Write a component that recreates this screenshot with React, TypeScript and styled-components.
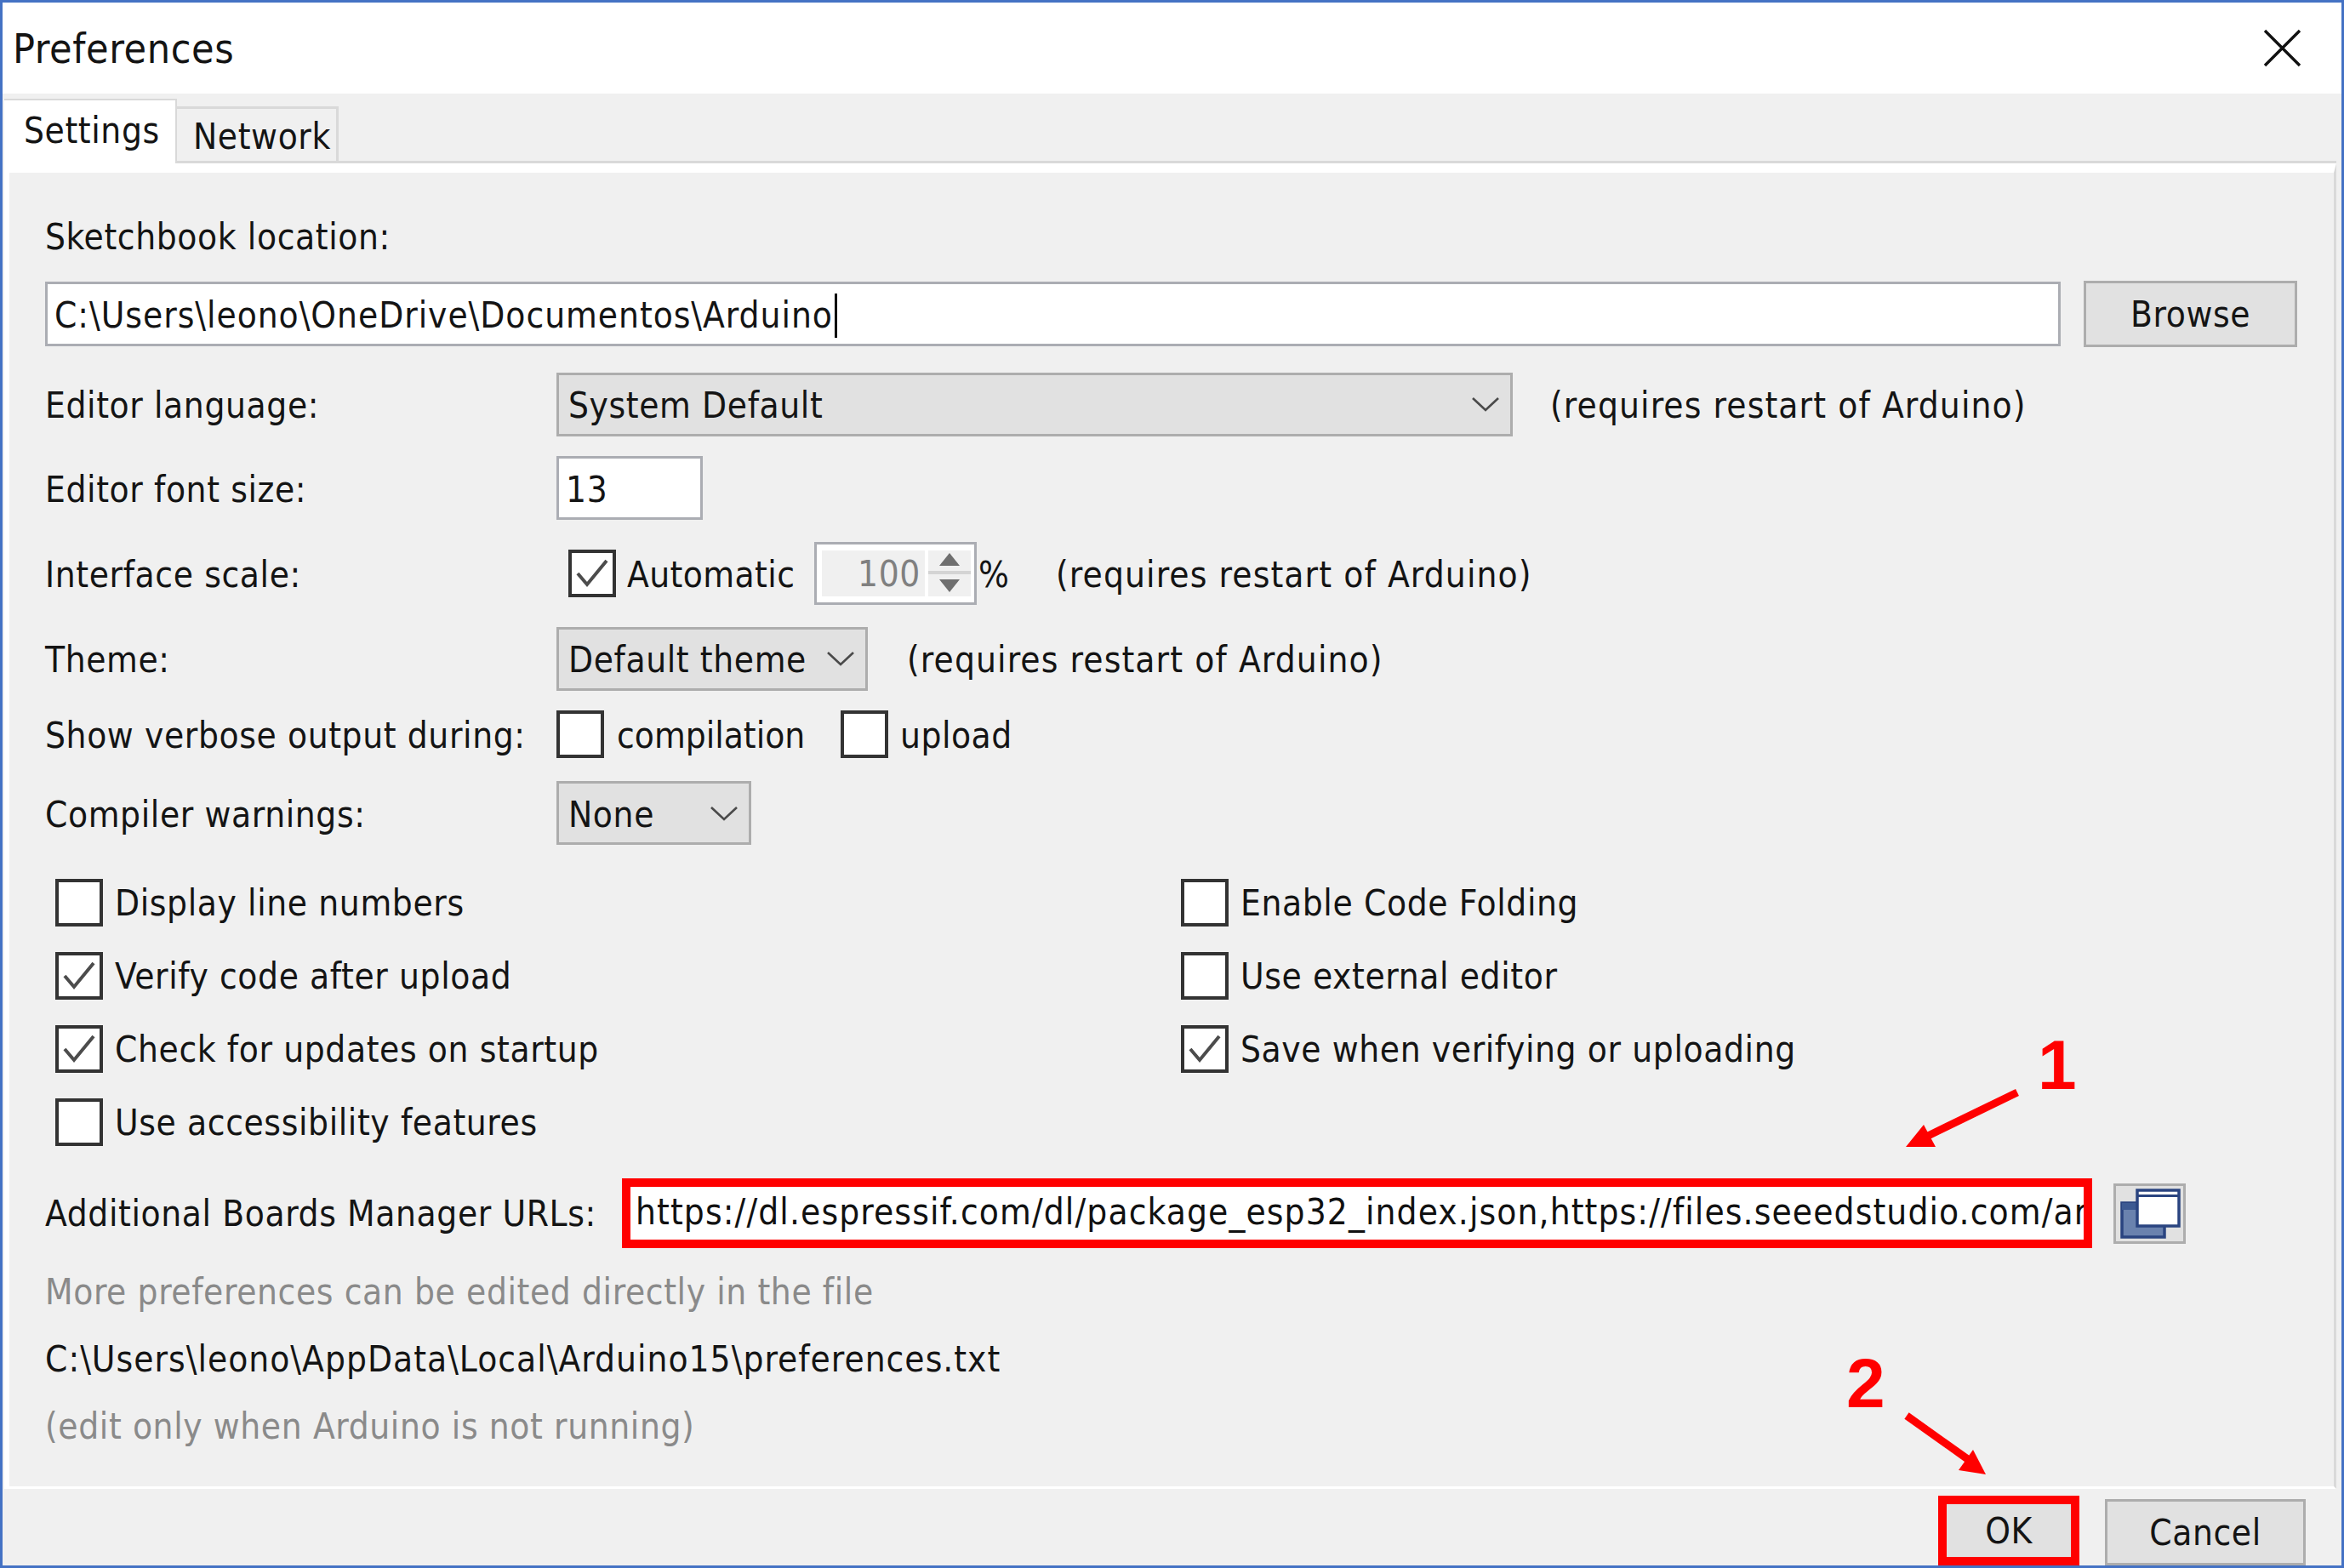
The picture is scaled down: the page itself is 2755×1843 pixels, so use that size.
import React from 'react';
import styled, { createGlobalStyle } from 'styled-components';

const GlobalStyle = createGlobalStyle`
    html, body {
        margin: 0;
        padding: 0;
        background: #f0f0f0;
    }
    * {
        box-sizing: border-box;
    }
`

const checkRows = [
    [
        { label: 'Display line numbers', checked: false },
        { label: 'Enable Code Folding', checked: false },
    ],
    [
        { label: 'Verify code after upload', checked: true },
        { label: 'Use external editor', checked: false },
    ],
    [
        { label: 'Check for updates on startup', checked: true },
        { label: 'Save when verifying or uploading', checked: true },
    ],
    [
        { label: 'Use accessibility features', checked: false },
    ],
];

const RESTART = '(requires restart of Arduino)';

const Chevron = () => (
    <svg width="34" height="20" viewBox="0 0 34 20">
        <polyline points="2,3 17,17 32,3" fill="none" stroke="#4a4a4a" strokeWidth="2.6" />
    </svg>
);

const Select = (props: { width: number; value: string }) => (
    <SelectBox $width={props.width}>
        <SelectText>{props.value}</SelectText>
        <Chevron />
    </SelectBox>
);

const Check = (props: { checked?: boolean }) => (
    <CheckBox>
        {props.checked && (
            <svg width="42" height="40" viewBox="0 0 42 40">
                <polyline points="4,20 15,33 38,5" fill="none" stroke="#4c4c4c" strokeWidth="4" />
            </svg>
        )}
    </CheckBox>
);

export default function App() {
    return (
        <Window>
            <GlobalStyle />
            <TitleBar>
                <Title>Preferences</Title>
                <svg width="45" height="45" viewBox="0 0 45 45">
                    <path d="M2 2 L43 43 M43 2 L2 43" stroke="#111" strokeWidth="3.4" />
                </svg>
            </TitleBar>
            <Body>
                <TabStrip>
                    <ActiveTab>Settings</ActiveTab>
                    <Tab>Network</Tab>
                </TabStrip>
                <Panel>
                    <Row $h={50} $mt={50}>Sketchbook location:</Row>
                    <Row $h={78} $mt={27}>
                        <TextBox $width={2369} $h={76} $ls={0.95}>
                            C:\Users\leono\OneDrive\Documentos\Arduino<Caret />
                        </TextBox>
                        <Button $width={251} $left={27}>Browse</Button>
                    </Row>
                    <Row $h={76} $mt={29}>
                        <Label>Editor language:</Label>
                        <Select width={1124} value="System Default" />
                        <Note $left={44} $ls={1.1}>{RESTART}</Note>
                    </Row>
                    <Row $h={75} $mt={23}>
                        <Label>Editor font size:</Label>
                        <TextBox $width={172} $h={75}>13</TextBox>
                    </Row>
                    <Row $h={74} $mt={26}>
                        <Label>Interface scale:</Label>
                        <ScaleCheck><Check checked /></ScaleCheck>
                        <Note $left={13} $width={199} $ls={0.4}>Automatic</Note>
                        <Spinner>
                            <SpinnerValue>100</SpinnerValue>
                            <SpinnerButtons>
                                <svg width="50" height="53" viewBox="0 0 50 53">
                                    <path d="M25 3 L37 18 L13 18 Z" fill="#6f6f6f" />
                                    <rect x="0" y="24" width="50" height="4" fill="#d4d4d4" />
                                    <path d="M13 34 L37 34 L25 49 Z" fill="#6f6f6f" />
                                </svg>
                            </SpinnerButtons>
                        </Spinner>
                        <Note $left={2} $width={42}>%</Note>
                        <Note $left={49} $ls={1.1}>{RESTART}</Note>
                    </Row>
                    <Row $h={74} $mt={26}>
                        <Label>Theme:</Label>
                        <Select width={366} value="Default theme" />
                        <Note $left={46} $ls={1.1}>{RESTART}</Note>
                    </Row>
                    <Row $h={54} $mt={25}>
                        <Label>Show verbose output during:</Label>
                        <Check />
                        <Note $left={15} $width={263} $ls={0}>compilation</Note>
                        <CheckBox />
                        <Note $left={14} $ls={0.5}>upload</Note>
                    </Row>
                    <Row $h={75} $mt={28}>
                        <Label>Compiler warnings:</Label>
                        <Select width={229} value="None" />
                    </Row>
                    <CheckGrid>
                        {checkRows.map((row) =>
                            row.map((item) => (
                                <CheckItem key={item.label}>
                                    <Check checked={item.checked} />
                                    <span>{item.label}</span>
                                </CheckItem>
                            ))
                        )}
                    </CheckGrid>
                    <Row $h={82} $mt={38}>
                        <BoardsLabel>Additional Boards Manager URLs:</BoardsLabel>
                        <UrlBox>https://dl.espressif.com/dl/package_esp32_index.json,https://files.seeedstudio.com/arduino/package_seeeduino_boards_index.json</UrlBox>
                        <IconButton>
                            <svg width="72" height="60" viewBox="0 0 72 60">
                                <rect x="3" y="18" width="50" height="40" fill="#6a82ae" stroke="#2a4480" strokeWidth="3.5" />
                                <rect x="3" y="18" width="50" height="8" fill="#3d5a92" />
                                <rect x="21" y="3" width="49" height="42" fill="#fff" stroke="#2a4480" strokeWidth="3.5" />
                                <rect x="21" y="8" width="49" height="3" fill="#2a4480" />
                            </svg>
                        </IconButton>
                    </Row>
                    <Row $h={50} $mt={26} $muted>More preferences can be edited directly in the file</Row>
                    <Row $h={50} $mt={29} $ls={1}>C:\Users\leono\AppData\Local\Arduino15\preferences.txt</Row>
                    <Row $h={50} $mt={29} $muted>(edit only when Arduino is not running)</Row>
                </Panel>
            </Body>
            <Footer>
                <OkBox>OK</OkBox>
                <Button $width={236} $left={30}>Cancel</Button>
            </Footer>

            <Arrows width="2755" height="1843" viewBox="0 0 2755 1843">
                <line x1="2371" y1="1284" x2="2262" y2="1337" stroke="#ff0000" strokeWidth="9" />
                <path d="M2240 1348 L2261 1322 L2275 1348 Z" fill="#ff0000" />
                <line x1="2241" y1="1664" x2="2314" y2="1716" stroke="#ff0000" strokeWidth="9" />
                <path d="M2334 1733 L2319 1704 L2302 1728 Z" fill="#ff0000" />
            </Arrows>
            <Callout $x={2392} $y={1208}>1</Callout>
            <Callout $x={2167} $y={1582}>2</Callout>
        </Window>
    );
}

const Window = styled.div`
    position: relative;
    width: 2755px;
    height: 1843px;
    overflow: hidden;
    border: 3px solid #4472c4;
    background: #f0f0f0;
    color: #141414;
    font-family: 'DejaVu Sans Condensed', 'DejaVu Sans', sans-serif;
    font-stretch: condensed;
    font-size: 42px;
    letter-spacing: 0.6px;
    display: flex;
    flex-direction: column;
`
const TitleBar = styled.div`
    height: 107px;
    flex: none;
    background: #ffffff;
    display: flex;
    align-items: center;
    justify-content: space-between;
    padding: 0 47px 0 12px;
`
const Title = styled.div`
    font-size: 48px;
`
const Body = styled.div`
    height: 1640px;
    flex: none;
    padding: 6px 6px 0 2px;
    display: flex;
    flex-direction: column;
`
const TabStrip = styled.div`
    height: 76px;
    flex: none;
    display: flex;
    align-items: flex-end;
    position: relative;
    &::after {
        content: '';
        flex: 1;
        height: 3px;
        margin-bottom: 0;
        background: #d9d9d9;
    }
`
const ActiveTab = styled.div`
    width: 203px;
    height: 76px;
    background: #ffffff;
    border: solid #d9d9d9;
    border-width: 2px 2px 0 0;
    padding-left: 23px;
    line-height: 72px;
`
const Tab = styled.div`
    width: 190px;
    height: 67px;
    border: 3px solid #d9d9d9;
    border-left: none;
    padding-left: 19px;
    line-height: 66px;
`
const Panel = styled.div`
    flex: 1;
    background: #f0f0f0;
    border-style: solid;
    border-color: #ffffff #d9d9d9 #ffffff #ffffff;
    border-width: 11px 3px 3px 6px;
    padding-left: 42px;
    display: flex;
    flex-direction: column;
`
const Row = styled.div<{ $h: number; $mt: number; $muted?: boolean; $ls?: number }>`
    height: ${props => props.$h}px;
    margin-top: ${props => props.$mt}px;
    flex: none;
    display: flex;
    align-items: center;
    white-space: nowrap;
    color: ${props => props.$muted ? '#8a8a8a' : 'inherit'};
    ${props => props.$ls !== undefined && `letter-spacing: ${props.$ls}px;`}
`
const Label = styled.div`
    width: 601px;
    flex: none;
    padding-top: 3px;
`
const BoardsLabel = styled.div`
    width: 678px;
    flex: none;
`
const Note = styled.div<{ $left: number; $width?: number; $ls?: number }>`
    margin-left: ${props => props.$left}px;
    ${props => props.$width !== undefined && `width: ${props.$width}px;`}
    ${props => props.$ls !== undefined && `letter-spacing: ${props.$ls}px;`}
    flex: none;
    padding-top: 3px;
`
const TextBox = styled.div<{ $width: number; $h: number; $ls?: number }>`
    width: ${props => props.$width}px;
    height: ${props => props.$h}px;
    flex: none;
    background: #ffffff;
    border: 3px solid #abadb3;
    padding: 3px 0 0 8px;
    display: flex;
    align-items: center;
    ${props => props.$ls !== undefined && `letter-spacing: ${props.$ls}px;`}
`
const Caret = styled.span`
    display: inline-block;
    width: 3px;
    height: 52px;
    margin-left: 2px;
    background: #000000;
`
const Button = styled.div<{ $width: number; $left: number }>`
    width: ${props => props.$width}px;
    height: 78px;
    margin-left: ${props => props.$left}px;
    flex: none;
    background: #e1e1e1;
    border: 3px solid #adadad;
    display: flex;
    align-items: center;
    justify-content: center;
`
const SelectBox = styled.div<{ $width: number }>`
    width: ${props => props.$width}px;
    height: 75px;
    flex: none;
    background: #e1e1e1;
    border: 3px solid #adadad;
    padding: 0 12px 0 11px;
    display: flex;
    align-items: center;
    justify-content: space-between;
`
const SelectText = styled.span`
    padding-top: 3px;
`
const CheckBox = styled.div`
    width: 56px;
    height: 56px;
    flex: none;
    background: #ffffff;
    border: 4px solid #333333;
    display: flex;
    align-items: center;
    justify-content: center;
`
const ScaleCheck = styled.div`
    margin-left: 14px;
    flex: none;
`
const Spinner = styled.div`
    width: 191px;
    height: 74px;
    margin-left: 21px;
    flex: none;
    background: #ffffff;
    border: 3px solid #abadb3;
    padding: 7px 4px 7px 6px;
    display: flex;
    justify-content: space-between;
`
const SpinnerValue = styled.div`
    width: 121px;
    background: #f0f0f0;
    color: #808080;
    text-align: right;
    padding-right: 5px;
    line-height: 56px;
`
const SpinnerButtons = styled.div`
    width: 50px;
    background: #f0f0f0;
    display: flex;
`
const CheckGrid = styled.div`
    margin-top: 40px;
    padding-left: 12px;
    display: grid;
    grid-template-columns: 1323px 1fr;
    grid-auto-rows: 56px;
    row-gap: 30px;
    flex: none;
`
const CheckItem = styled.div`
    display: flex;
    align-items: center;
    gap: 14px;
    white-space: nowrap;
`
const UrlBox = styled.div`
    width: 1728px;
    height: 82px;
    flex: none;
    background: #ffffff;
    border: 10px solid #ff0000;
    padding: 0 3px 0 6px;
    overflow: hidden;
    line-height: 60px;
    white-space: nowrap;
    letter-spacing: 1.1px;
    color: #111111;
`
const IconButton = styled.div`
    width: 85px;
    height: 71px;
    margin-left: 25px;
    flex: none;
    background: #e1e1e1;
    border: 3px solid #adadad;
    display: flex;
    align-items: center;
    justify-content: center;
`
const Footer = styled.div`
    flex: 1;
    display: flex;
    align-items: flex-end;
    justify-content: flex-end;
    padding-right: 42px;
    padding-bottom: 0;
`
const OkBox = styled.div`
    width: 166px;
    height: 82px;
    flex: none;
    background: #e1e1e1;
    border: 10px solid #ff0000;
    display: flex;
    align-items: center;
    justify-content: center;
`
const Arrows = styled.svg`
    position: absolute;
    left: -3px;
    top: -3px;
    pointer-events: none;
`
const Callout = styled.div<{ $x: number; $y: number }>`
    position: absolute;
    left: ${props => props.$x}px;
    top: ${props => props.$y}px;
    font-family: 'Liberation Sans', sans-serif;
    font-stretch: normal;
    font-weight: 700;
    font-size: 82px;
    line-height: 1;
    letter-spacing: 0;
    color: #ff0000;
`
